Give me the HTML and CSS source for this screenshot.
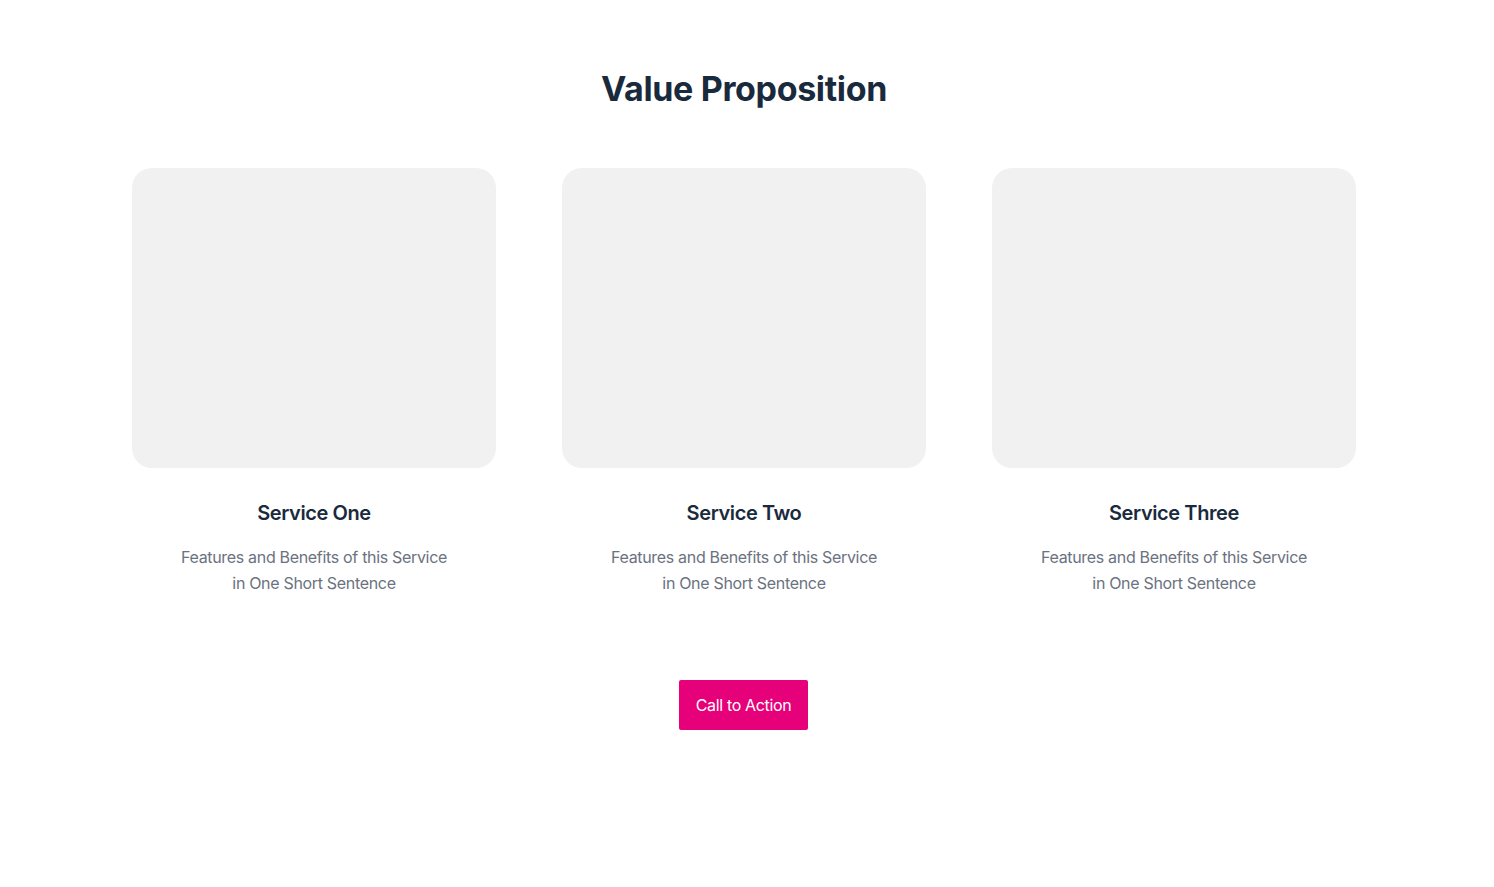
FILE: index.html
```html
<!DOCTYPE html>
<html lang="en">
<head>
<meta charset="utf-8">
<title>Value Proposition</title>
<link rel="stylesheet" href="styles.css">
</head>
<body>
<section class="section">
  <h1 class="heading">Value Proposition</h1>
  <div class="cards">
    <div class="card">
      <div class="card-image"></div>
      <h2 class="card-title">Service One</h2>
      <p class="card-text">Features and Benefits of this Service in One Short Sentence</p>
    </div>
    <div class="card">
      <div class="card-image"></div>
      <h2 class="card-title">Service Two</h2>
      <p class="card-text">Features and Benefits of this Service in One Short Sentence</p>
    </div>
    <div class="card">
      <div class="card-image"></div>
      <h2 class="card-title">Service Three</h2>
      <p class="card-text">Features and Benefits of this Service in One Short Sentence</p>
    </div>
  </div>
  <a class="cta" href="#">Call to Action</a>
</section>
</body>
</html>
```

FILE: styles.css
```css
* { box-sizing: border-box; }
html, body { margin: 0; padding: 0; background: #ffffff; }
body {
  font-family: Inter, "Noto Sans", sans-serif;
  color: #1a2a3d;
}
.section {
  width: 1488px;
  display: flex;
  flex-direction: column;
  align-items: center;
  padding-top: 68px;
}
.heading {
  margin: 0;
  font-size: 34px;
  line-height: 42px;
  font-weight: 700;
  color: #1a2a3d;
  letter-spacing: -0.35px;
}
.cards {
  margin-top: 58px;
  display: grid;
  grid-template-columns: repeat(3, 364px);
  column-gap: 66px;
}
.card {
  display: flex;
  flex-direction: column;
  align-items: center;
  text-align: center;
}
.card-image {
  width: 364px;
  height: 300px;
  background: #f1f1f1;
  border-radius: 20px;
}
.card-title {
  margin: 31px 0 0;
  font-size: 20px;
  line-height: 28px;
  font-weight: 600;
  color: #1a2a3d;
  letter-spacing: -0.4px;
}
.card-text {
  margin: 17px 0 0;
  max-width: 280px;
  font-size: 16px;
  line-height: 26px;
  color: #6b7280;
  letter-spacing: -0.32px;
}
.cta {
  margin-top: 84px;
  margin-left: -1px;
  display: inline-flex;
  align-items: center;
  justify-content: center;
  width: 129px;
  height: 50px;
  background: #e6007a;
  color: #ffffff;
  font-size: 16px;
  letter-spacing: -0.35px;
  text-decoration: none;
  border-radius: 2px;
}
```
